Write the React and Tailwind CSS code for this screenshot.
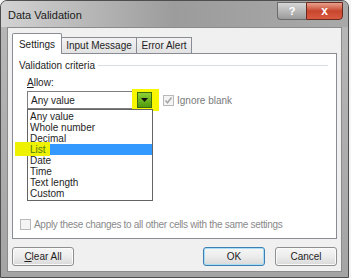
import React from "react";

const font = { fontFamily: '"Liberation Sans", Arial, sans-serif' };

function Check({ checked, className = "" }) {
  return (
    <div className={"w-[11px] h-[11px] border border-[#b9b9b9] bg-[#f4f4f4] flex items-center justify-center " + className}>
      {checked && (
        <svg width="9" height="9" viewBox="0 0 9 9">
          <path d="M1.5 4.5 L3.5 6.8 L7.5 1.5" fill="none" stroke="#a8a8a8" strokeWidth="1.6" />
        </svg>
      )}
    </div>
  );
}

function Btn({ children, def, className = "" }) {
  return (
    <div
      className={
        "h-[19px] w-[62px] rounded-[3px] border flex items-center justify-center text-[10px] text-[#1e1e1e] bg-gradient-to-b from-[#f6f6f6] via-[#ececec] to-[#d9d9d9] " +
        (def ? "border-[#3c7fb1] shadow-[inset_0_0_0_1px_#a9dcf5]" : "border-[#8e8f8f] shadow-[inset_0_0_0_1px_#fbfbfb]") +
        " " + className
      }
    >
      {children}
    </div>
  );
}

export default function App() {
  const items = ["Any value", "Whole number", "Decimal", "List", "Date", "Time", "Text length", "Custom"];
  return (
    <div className="w-[351px] h-[278px] bg-[#f4f4f4] overflow-hidden" style={font}>
      <div className="w-[349px] h-[278px] rounded-t-[7px] border border-[#4e4e4e] bg-gradient-to-b from-[#b8b8b8] to-[#a4a4a4] flex flex-col">
        {/* Title bar */}
        <div className="h-[26px] flex items-start bg-gradient-to-r from-[#d3d3d3] via-[#9c9c9c] to-[#a9a9a9] rounded-t-[6px]">
          <div className="pl-[7px] pt-[6px] text-[11px] text-[#1a1a1a]">Data Validation</div>
          <div className="ml-auto mr-[5px] flex mt-[1px]">
            <div className="w-[29px] h-[18px] rounded-bl-[4px] border border-[#6a6a6a] border-r-0 bg-gradient-to-b from-[#d6d6d6] to-[#9b9b9b] flex items-center justify-center text-white text-[11px] font-bold">?</div>
            <div className="w-[37px] h-[18px] rounded-br-[4px] border border-[#6b2a20] bg-gradient-to-b from-[#e7a08c] via-[#c8452e] to-[#d95a40] flex items-center justify-center text-white text-[12px] font-bold">x</div>
          </div>
        </div>
        {/* Client area */}
        <div className="flex-1 mx-[6px] mb-[5px] bg-[#f0f0f0] border border-[#8b8b8b] px-[4px] pt-[5px] flex flex-col">
          {/* tabs */}
          <div className="flex items-end h-[20px] relative z-10">
            <div className="h-[21px] w-[50px] bg-white border border-[#898c95] border-b-0 rounded-t-[2px] flex items-center justify-center text-[10px] text-[#1e1e1e] mb-[-1px]">Settings</div>
            <div className="h-[16px] w-[75px] bg-gradient-to-b from-[#f3f3f3] to-[#e2e2e2] border border-[#898c95] border-l-0 border-b-0 flex items-center justify-center text-[10px] text-[#1e1e1e]">Input Message</div>
            <div className="h-[16px] w-[55px] bg-gradient-to-b from-[#f3f3f3] to-[#e2e2e2] border border-[#898c95] border-l-0 border-b-0 flex items-center justify-center text-[10px] text-[#1e1e1e]">Error Alert</div>
          </div>
          {/* panel */}
          <div className="h-[186px] bg-white border border-[#898c95] flex flex-col px-[6px] pt-[5px] relative">
            <div className="flex items-center gap-[3px] text-[10px] leading-[13px] text-[#1e1e1e]">
              <span>Validation criteria</span>
              <div className="flex-1 h-px bg-[#d5dfe5] mr-[2px]"></div>
            </div>
            <div className="pl-[8px] mt-[4px] text-[10px] leading-[13px] text-[#1e1e1e]">
              <span className="underline">A</span>llow:
            </div>
            <div className="pl-[8px] mt-[2px] flex items-center relative">
              <div className="w-[126px] h-[18px] border border-[#7f7f7f] bg-white flex items-center relative">
                <span className="pl-[3px] text-[10px] text-[#1e1e1e]">Any value</span>
                <div className="absolute left-[104px] top-[-3px] w-[27px] h-[22px] bg-[#f7f700]"></div>
                <div className="absolute right-[0px] top-[0px] w-[15px] h-[16px] bg-gradient-to-b from-[#8fd234] to-[#4f9a0c] border border-[#3d6b10] flex items-center justify-center">
                  <svg width="7" height="4" viewBox="0 0 7 4"><path d="M0 0 H7 L3.5 4 Z" fill="#111" /></svg>
                </div>
              </div>
              <Check checked className="ml-[10px]" />
              <span className="ml-[3px] text-[10px] text-[#7a7a7a]">Ignore blank</span>
              {/* dropdown list overlay */}
              <div className="absolute left-[8px] top-[18px] w-[126px] border border-[#646464] bg-white z-20 py-[1px]">
                {items.map((it) => (
                  <div
                    key={it}
                    className={
                      "h-[11px] leading-[11px] pl-[2px] text-[10px] relative " +
                      (it === "List" ? "bg-[#3399ff] text-[#4f7a12]" : "text-[#1e1e1e]")
                    }
                  >
                    {it === "List" && <div className="absolute left-[-13px] top-[-2px] w-[35px] h-[14px] bg-[#eef200]"></div>}
                    <span className="relative">{it}</span>
                  </div>
                ))}
              </div>
            </div>
            <div className="mt-auto mb-[6px] flex items-center pl-[1px]">
              <Check />
              <span className="ml-[3px] text-[10px] tracking-[-0.3px] text-[#8a8a8a]">Apply these changes to all other cells with the same settings</span>
            </div>
          </div>
          {/* buttons */}
          <div className="flex items-center mt-[8px]">
            <Btn><span><span className="underline">C</span>lear All</span></Btn>
            <Btn def className="ml-auto">OK</Btn>
            <Btn className="ml-[10px]">Cancel</Btn>
          </div>
        </div>
      </div>
    </div>
  );
}
